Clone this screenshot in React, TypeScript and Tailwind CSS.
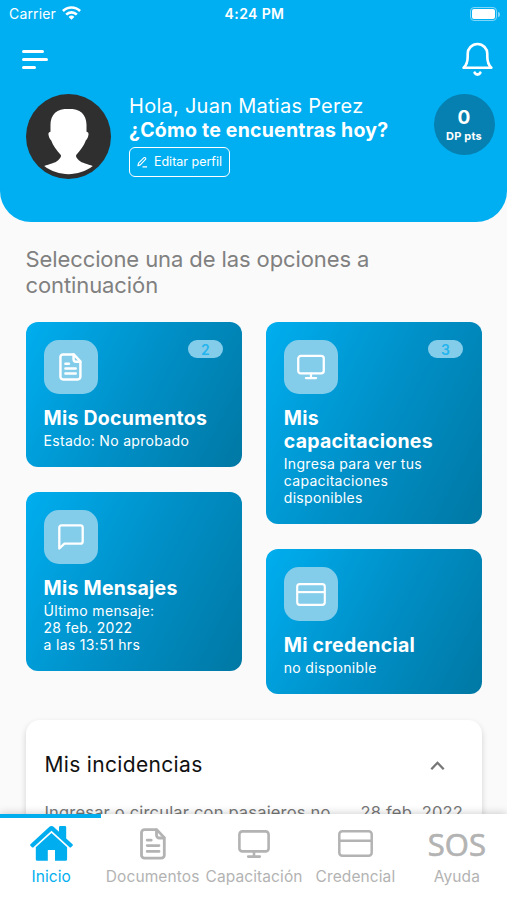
import React from "react";

type IconProps = { className?: string };

const DocIcon = ({ className }: IconProps) => (
  <svg viewBox="0 0 26 32" fill="none" stroke="currentColor" strokeWidth="2.8" strokeLinecap="round" strokeLinejoin="round" className={className}>
    <path d="M4.500 1.600h12.200l7.600 8v17.600a3 3 0 0 1-3 3H4.500a3 3 0 0 1-3-3V4.600a3 3 0 0 1 3-3Z" />
    <path d="M16.500 1.800v5.400a2.800 2.800 0 0 0 2.800 2.800h4.800" />
    <path d="M7.200 12.200h4M7.200 17.600h11.800M7.200 23.400h11.800" />
  </svg>
);

const MonitorIcon = ({ className }: IconProps) => (
  <svg viewBox="0 0 32 28" fill="none" stroke="currentColor" strokeWidth="2.6" strokeLinecap="round" strokeLinejoin="round" className={className}>
    <rect x="1.400" y="1.400" width="29.200" height="20" rx="3" />
    <path d="M16 21.600v5M10.200 26.600h11.600" />
  </svg>
);

const CardIcon = ({ className }: IconProps) => (
  <svg viewBox="0 0 35 27" fill="none" stroke="currentColor" strokeWidth="2.5" strokeLinejoin="round" className={className}>
    <rect x="1.300" y="1.300" width="32.400" height="24.400" rx="3" />
    <path d="M1.500 10.700h32" />
  </svg>
);

const MessageIcon = ({ className }: IconProps) => (
  <svg viewBox="0 0 26 26" fill="none" stroke="currentColor" strokeWidth="2.300" strokeLinejoin="round" className={className}>
    <path d="M3.500 1.400h19a2.200 2.200 0 0 1 2.200 2.200V17.400a2.200 2.200 0 0 1-2.200 2.200H6.400L1.300 24.500V3.600a2.200 2.200 0 0 1 2.200-2.200Z" />
  </svg>
);

const HomeIcon = ({ className }: IconProps) => (
  <svg viewBox="0 0 43 35" fill="currentColor" className={className}>
    <path d="M30.200 0H35a1.200 1.200 0 0 1 1.200 1.200V12.500L42.300 18a1.400 1.400 0 0 1 0 2.100l-1 1a1.400 1.400 0 0 1-2 0L21.500 4.700 3.700 21.100a1.400 1.400 0 0 1-2 0l-1-1a1.400 1.400 0 0 1 0-2.100L18.900 1.200a3.900 3.900 0 0 1 5.200 0L29 5.700V1.200A1.200 1.200 0 0 1 30.200 0Z" />
    <path d="m21.500 6.900 15.600 14.400v12a1.500 1.500 0 0 1-1.500 1.500H25V23.900h-7.200v10.900H7.300a1.500 1.500 0 0 1-1.500-1.500v-12Z" />
  </svg>
);

const BellIcon = ({ className }: IconProps) => (
  <svg viewBox="0 0 32 36" fill="none" stroke="currentColor" strokeWidth="2.700" strokeLinecap="round" strokeLinejoin="round" className={className}>
    <path d="M1.700 26h28.600c-3-2.900-4.200-6.100-4.200-12V12A10.100 10.100 0 0 0 16 1.500 10.100 10.100 0 0 0 5.900 12v2c0 5.900-1.200 9.100-4.200 12Z" />
    <path d="M13.200 31.300c.6 1.100 1.600 1.700 2.800 1.700s2.200-.6 2.800-1.700" strokeWidth="3" />
  </svg>
);

const WifiIcon = ({ className }: IconProps) => (
  <svg viewBox="0 0 19 14" fill="none" stroke="currentColor" strokeWidth="2.700" className={className}>
    <path d="M.9 5a12.300 12.300 0 0 1 17.200 0M4.200 8.600a7.600 7.600 0 0 1 10.600 0" />
    <path d="M9.500 13.800 6.600 10.900a4.300 4.300 0 0 1 5.800 0Z" fill="currentColor" stroke="none" />
  </svg>
);

const Avatar = () => (
  <svg viewBox="0 0 84 84" className="mt-[1px] size-[85px] shrink-0">
    <circle cx="42" cy="42" r="42" fill="#2f2f2f" />
    <path
      fill="#fff"
      d="M42 14.500c-11.500 0-17.800 5.500-17.800 16v6.800c-2 .2-2.400 1.900-1.700 4.100.6 2 1.200 3.400 2.300 4.200 2 5.400 5.200 9.800 9.400 14.400 1.200 1.400-.4 3.300-2.400 5.400-3.200 3-8.600 3.600-13.800 5.800C25 76.500 33.500 79.200 42 79.200s17-2.700 24-8c-5.200-2.200-10.600-2.800-13.800-5.800-2-2.100-3.600-4-2.400-5.400 4.200-4.600 7.400-9 9.400-14.400 1.100-.8 1.700-2.200 2.300-4.200.7-2.200.3-3.900-1.700-4.100v-6.800c0-10.500-6.300-16-17.800-16Z"
    />
  </svg>
);

type CardProps = {
  icon: React.ReactNode;
  title: React.ReactNode;
  badge?: string;
  children: React.ReactNode;
};

const OptionCard = ({ icon, title, badge, children }: CardProps) => (
  <section className="rounded-[12px] bg-[linear-gradient(117deg,#00aeef_0%,#0090c8_50%,#0078a4_100%)] p-[18px] pr-[19px] text-white">
    <div className="flex items-start justify-between">
      <div className="flex size-[54px] items-center justify-center rounded-[15px] bg-[#84cdea]">{icon}</div>
      {badge && (
        <span className="flex h-[18px] w-[35px] items-center justify-center rounded-full bg-[#84cdea] text-[14px] font-semibold text-[#24b4ee]">
          {badge}
        </span>
      )}
    </div>
    <h2 className="mt-[13px] text-[19.500px] leading-[23px] font-bold tracking-[0.26px] whitespace-nowrap">{title}</h2>
    <p className="mt-[2px] text-[14px] leading-[17px] tracking-[0.32px] whitespace-nowrap">{children}</p>
  </section>
);

type TabProps = { icon: React.ReactNode; label: string; active?: boolean };

const Tab = ({ icon, label, active }: TabProps) => (
  <div className={`flex min-w-0 flex-1 flex-col items-center ${active ? "text-[#00aeef]" : "text-[#b3b3b3]"}`}>
    <div className={`h-[4px] w-full ${active ? "bg-[#00aeef]" : "bg-transparent"}`} />
    <div className="mt-[4px] flex h-[43px] items-center justify-center pl-[1px]">{icon}</div>
    <span className="mt-[1px] pl-[1px] text-[15.500px] leading-[22px] tracking-[0.1px] whitespace-nowrap">{label}</span>
  </div>
);

export default function App() {
  return (
    <div className="flex h-[900px] w-[507px] flex-col overflow-hidden bg-[#fafafa] font-['Inter','Liberation_Sans',sans-serif]">
      <header className="h-[222px] shrink-0 rounded-b-[31px] bg-[#00aff2] text-white">
        <div className="grid h-[28px] grid-cols-3 items-center pr-[7px] pl-[9px] text-[14px] leading-[18px]">
          <div className="flex items-center gap-[6px]">
            <span className="tracking-[0.15px]">Carrier</span>
            <WifiIcon className="mb-[3px] h-[14px] w-[19px]" />
          </div>
          <span className="text-center font-semibold tracking-[0.4px]">4:24 PM</span>
          <div className="flex items-center justify-end gap-[1px]">
            <div className="h-[14px] w-[27px] rounded-[4px] border border-[#7fd6f8] p-[1px]">
              <div className="h-full w-full rounded-[2px] bg-white" />
            </div>
            <div className="h-[5px] w-[2px] rounded-r-full bg-[#7fd6f8]" />
          </div>
        </div>
        <div className="flex justify-between pt-[14px] pr-[14px] pl-[22px]">
          <div className="flex flex-col gap-[5px] pt-[8px]">
            <div className="h-[3px] w-[22px] rounded-full bg-white" />
            <div className="h-[3px] w-[26px] rounded-full bg-white" />
            <div className="h-[3px] w-[14px] rounded-full bg-white" />
          </div>
          <BellIcon className="h-[36px] w-[31px]" />
        </div>
        <div className="mt-[15px] flex pr-[12.500px] pl-[25.500px]">
          <Avatar />
          <div className="ml-[18.500px] flex-1 pt-[1px] whitespace-nowrap">
            <p className="text-[20px] leading-[24px] tracking-[0.27px]">Hola, Juan Matias Perez</p>
            <p className="text-[19.500px] leading-[24px] font-bold tracking-[0.22px]">¿Cómo te encuentras hoy?</p>
            <button className="mt-[5px] flex h-[30px] w-[101px] items-center justify-center gap-[6px] rounded-[6px] border border-white pt-[1px] text-[12.500px]">
              <svg viewBox="0 0 12 12" fill="none" stroke="currentColor" strokeWidth="1.200" strokeLinejoin="round" className="size-[11px]">
                <path d="m1 9.500.7-2.800 5.700-5.800a1.200 1.200 0 0 1 1.800 1.800L3.600 8.600ZM6 10.800h5" />
              </svg>
              Editar perfil
            </button>
          </div>
          <div className="mt-[1px] flex size-[61px] shrink-0 flex-col items-center rounded-full bg-[#0580b0] pt-[13px] font-bold">
            <span className="text-[19px] leading-[21px]">0</span>
            <span className="text-[11px] leading-[16px] tracking-[0.2px]">DP pts</span>
          </div>
        </div>
      </header>

      <main className="min-h-0 flex-1 overflow-hidden px-[25px] pt-[24px] pl-[25.500px]">
        <h1 className="text-[22px] leading-[26px] tracking-[-0.1px] text-[#808080]">
          Seleccione una de las opciones a
          <br />
          continuación
        </h1>
        <div className="mt-[24px] grid grid-cols-2 items-start gap-[24px]">
          <div className="flex flex-col gap-[25px]">
            <OptionCard icon={<DocIcon className="h-[28px] w-[23px]" />} title="Mis Documentos" badge="2">
              Estado: No aprobado
            </OptionCard>
            <OptionCard icon={<MessageIcon className="size-[26px]" />} title="Mis Mensajes">
              Último mensaje:
              <br />
              28 feb. 2022
              <br />a las 13:51 hrs
            </OptionCard>
          </div>
          <div className="flex flex-col gap-[25px]">
            <OptionCard
              icon={<MonitorIcon className="h-[26px] w-[28px]" />}
              title={
                <>
                  Mis
                  <br />
                  capacitaciones
                </>
              }
              badge="3"
            >
              Ingresa para ver tus
              <br />
              capacitaciones
              <br />
              disponibles
            </OptionCard>
            <OptionCard icon={<CardIcon className="h-[23px] w-[30px]" />} title="Mi credencial">
              no disponible
            </OptionCard>
          </div>
        </div>
        <section className="mt-[26px] h-[180px] rounded-[14px] bg-white px-[19px] pt-[31px] shadow-[0_3px_6px_rgba(0,0,0,0.17)]">
          <div className="flex items-center justify-between pr-[18px]">
            <h2 className="text-[21px] leading-[28px] tracking-[0.33px] text-[#111]">Mis incidencias</h2>
            <svg viewBox="0 0 14 9" fill="none" stroke="#777" strokeWidth="2.300" className="h-[9px] w-[15px]">
              <path d="m.8 8.200 6.200-6.400 6.200 6.400" />
            </svg>
          </div>
          <div className="mt-[21px] flex justify-between text-[16.500px] leading-[24px] tracking-[0.18px] whitespace-nowrap text-[#777]">
            <span>Ingresar o circular con pasajeros no</span>
            <span>28 feb. 2022</span>
          </div>
        </section>
      </main>

      <nav className="z-10 flex h-[86px] shrink-0 bg-white shadow-[0_-1px_8px_rgba(0,0,0,0.18)]">
        <Tab active label="Inicio" icon={<HomeIcon className="h-[35px] w-[43px]" />} />
        <Tab label="Documentos" icon={<DocIcon className="h-[32px] w-[26px]" />} />
        <Tab label="Capacitación" icon={<MonitorIcon className="h-[28px] w-[32px]" />} />
        <Tab label="Credencial" icon={<CardIcon className="h-[27px] w-[35px]" />} />
        <Tab label="Ayuda" icon={<span className="font-['Open_Sans',sans-serif] text-[31px] leading-[40px] [-webkit-text-stroke:0.7px_currentColor]">SOS</span>} />
      </nav>
    </div>
  );
}
